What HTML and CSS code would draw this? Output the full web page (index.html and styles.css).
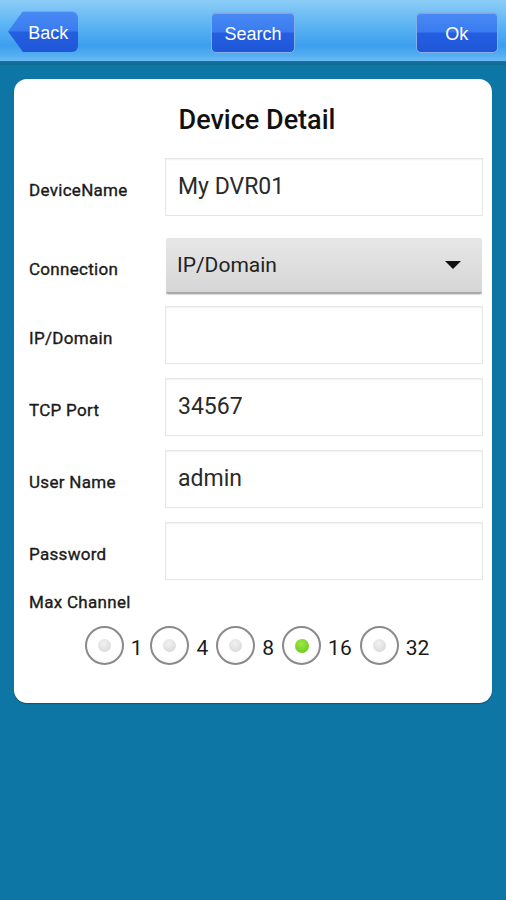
FILE: index.html
```html
<!DOCTYPE html>
<html>
<head>
<meta charset="utf-8">
<link rel="stylesheet" href="styles.css">
</head>
<body>
<div class="app">
  <header class="topbar">
    <button class="btn btn-back">Back</button>
    <button class="btn btn-search">Search</button>
    <button class="btn btn-ok">Ok</button>
  </header>
  <div class="band"></div>
  <main class="card">
    <h1 class="title">Device Detail</h1>
    <div class="form">
      <div class="row">
        <span class="label">DeviceName</span>
        <div class="field">My DVR01</div>
      </div>
      <div class="row row-select">
        <span class="label">Connection</span>
        <div class="select">
          <span>IP/Domain</span>
          <span class="caret"></span>
        </div>
      </div>
      <div class="row">
        <span class="label">IP/Domain</span>
        <div class="field"></div>
      </div>
      <div class="row">
        <span class="label">TCP Port</span>
        <div class="field">34567</div>
      </div>
      <div class="row">
        <span class="label">User Name</span>
        <div class="field">admin</div>
      </div>
      <div class="row">
        <span class="label">Password</span>
        <div class="field"></div>
      </div>
    </div>
    <div class="maxch">Max Channel</div>
    <div class="radios">
      <span class="radio"><span class="dot"></span></span><span class="rlabel">1</span>
      <span class="radio"><span class="dot"></span></span><span class="rlabel">4</span>
      <span class="radio"><span class="dot"></span></span><span class="rlabel">8</span>
      <span class="radio"><span class="dot on"></span></span><span class="rlabel">16</span>
      <span class="radio"><span class="dot"></span></span><span class="rlabel">32</span>
    </div>
  </main>
</div>
</body>
</html>
```

FILE: styles.css
```css
* { box-sizing: border-box; }
html, body { margin: 0; padding: 0; }
body {
  width: 506px;
  height: 900px;
  overflow: hidden;
  background: #0d76a5;
  font-family: Roboto, "Liberation Sans", sans-serif;
}
.app { display: flex; flex-direction: column; height: 900px; }

.topbar {
  height: 61px;
  display: flex;
  align-items: flex-start;
  padding: 11px 8px 0 8px;
  background: linear-gradient(to bottom, #8ccdf7 0%, #5db5f3 40%, #3c9fee 75%, #56b0f2 92%, #6cbaf2 100%);
}
.band {
  height: 4px;
  background: linear-gradient(to bottom, #1b6fa8, #0b6c8c);
}
.btn {
  border: 1px solid #86aee8;
  border-radius: 5px;
  color: #ffffff;
  font-family: "Liberation Sans", Arial, sans-serif;
  font-size: 18px;
  height: 41px;
  padding: 3px 0 0 0;
  background: linear-gradient(to bottom, #4a8af4 0%, #3a7cf0 48%, #245fe0 52%, #1f56d8 100%);
  box-shadow: inset 0 1px 0 rgba(255,255,255,0.25);
}
.btn-back {
  width: 71px;
  padding-left: 10px;
  border: none;
  border-radius: 0 6px 6px 0;
  clip-path: polygon(0 50%, 15px 0, 100% 0, 100% 100%, 15px 100%);
}
.btn-search { width: 84px; margin-top: 1px; margin-left: 133px; }
.btn-ok { width: 83px; margin-top: 1px; margin-left: 121px; }

.card {
  margin: 14px 14px 0 14px;
  background: #ffffff;
  border-radius: 13px;
  height: 624px;
  padding: 25px 9px 0 15px;
  box-shadow: 0 1px 1px rgba(0,0,0,0.3);
}
.title {
  margin: 0;
  text-align: center;
  font-size: 27px;
  font-weight: 500;
  color: #111;
  line-height: 32px;
  padding-left: 2px;
}
.form {
  display: flex;
  flex-direction: column;
  gap: 14px;
  margin-top: 22px;
}
.row {
  display: flex;
  align-items: center;
  height: 58px;
}
.row-select { margin-top: 8px; height: 56px; margin-bottom: -2px; }
.label, .maxch {
  font-size: 17px;
  font-weight: 400;
  letter-spacing: 0.3px;
  color: #1a1a1a;
  -webkit-text-stroke: 0.35px #1a1a1a;
}
.label {
  width: 136px;
  padding-top: 6px;
}
.field {
  flex: 1;
  height: 58px;
  border: 1px solid #e6e6e6;
  box-shadow: inset 0 1px 2px rgba(0,0,0,0.06);
  background: #fff;
  font-size: 23px;
  color: #2a2a2a;
  display: flex;
  align-items: center;
  padding-left: 12px;
  padding-bottom: 2px;
}
.select {
  flex: 1;
  height: 56px;
  margin-left: 1px;
  margin-right: 1px;
  border-radius: 2px;
  background: linear-gradient(to bottom, #e7e7e7, #d6d6d6);
  border-bottom: 2px solid #a8a8a8;
  box-shadow: 0 1px 1px rgba(0,0,0,0.15);
  display: flex;
  align-items: center;
  justify-content: space-between;
  padding: 0 21px 0 11px;
  font-size: 21px;
  color: #222;
}
.caret {
  width: 0; height: 0;
  border-left: 8px solid transparent;
  border-right: 8px solid transparent;
  border-top: 8px solid #111;
}
.maxch {
  margin-top: 12px;
}
.radios {
  display: flex;
  align-items: center;
  justify-content: center;
  margin-top: 14px;
  padding-left: 2px;
}
.radio {
  width: 39px;
  height: 39px;
  border-radius: 50%;
  border: 2px solid #8a8a8a;
  background: radial-gradient(circle at 50% 40%, #ffffff 55%, #f2f2f2 100%);
  display: flex;
  align-items: center;
  justify-content: center;
}
.dot {
  width: 13px; height: 13px;
  border-radius: 50%;
  background: radial-gradient(circle at 45% 35%, #f2f2f2, #d3d3d3);
}
.dot.on {
  width: 14px; height: 14px;
  background: radial-gradient(circle at 45% 35%, #9be84a, #62c40e);
}
.rlabel {
  font-size: 21px;
  color: #1a1a1a;
  margin: 4px 8px 0 7px;
}
.rlabel:last-child { margin-right: 0; }
```
